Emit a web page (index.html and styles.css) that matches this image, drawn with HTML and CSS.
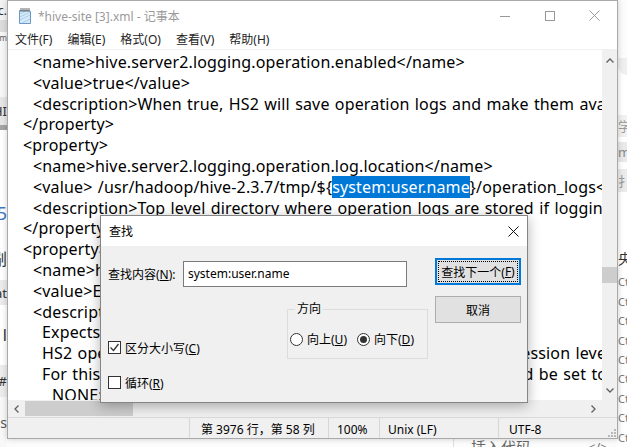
FILE: index.html
```html
<!DOCTYPE html>
<html lang="zh-CN">
<head>
  <meta charset="UTF-8">
  <title>*hive-site [3].xml - 记事本</title>
  <link rel="stylesheet" href="styles.css">
</head>
<body>
  <div class="screen">
    <div class="desk-left">
      <div class="dl dl-a"><span>ac.</span></div>
      <div class="dl dl-b"></div>
      <div class="dl dl-c"><span>m</span></div>
      <div class="dl dl-d"><span>HI</span></div>
      <div class="dl dl-e"></div>
      <div class="dl dl-f"></div>
      <div class="dl dl-g"><span>5</span></div>
      <div class="dl dl-h"><span>剐</span></div>
      <div class="dl dl-i"><span>at</span></div>
      <div class="dl dl-j"><span>l</span></div>
      <div class="dl dl-k"><span>#</span></div>
      <div class="dl dl-l"><span>s</span></div>
    </div>

    <div class="middle">
      <div class="window">
        <div class="titlebar">
          <svg class="app-icon" width="16" height="17" viewBox="0 0 16 17">
            <path d="M2.5 3.5h10l1 1v12h-11z" fill="#d6ebf9" stroke="#6a96c4"/>
            <path d="M3 7l6-3M3 10l10-5M3 13l10-5M5 16l8-4" stroke="#a9cbea"/>
            <path d="M4 1v4M6 1v4M8 1v4M10 1v4M12 1v4" stroke="#6b6b6b"/>
          </svg>
          <span class="title">*hive-site [3].xml - 记事本</span>
          <div class="win-controls">
            <div class="ctl"><svg width="10" height="10" viewBox="0 0 10 10"><path d="M0 5.5h10" stroke="#999"/></svg></div>
            <div class="ctl"><svg width="10" height="10" viewBox="0 0 10 10"><rect x="0.5" y="0.5" width="9" height="9" fill="none" stroke="#999"/></svg></div>
            <div class="ctl"><svg width="11" height="11" viewBox="0 0 11 11"><path d="M0.5 0.5l10 10M10.5 0.5l-10 10" stroke="#999"/></svg></div>
          </div>
        </div>

        <div class="menubar">
          <span>文件(F)</span>
          <span>编辑(E)</span>
          <span>格式(O)</span>
          <span>查看(V)</span>
          <span>帮助(H)</span>
        </div>

        <div class="editor">
          <div class="edit-row">
            <div class="text">
              <div class="ln i2">&lt;name&gt;hive.server2.logging.operation.enabled&lt;/name&gt;</div>
              <div class="ln i2">&lt;value&gt;true&lt;/value&gt;</div>
              <div class="ln i2">&lt;description&gt;When true, HS2 will save operation logs and make them available for clients&lt;/description&gt;</div>
              <div class="ln i1">&lt;/property&gt;</div>
              <div class="ln i1">&lt;property&gt;</div>
              <div class="ln i2">&lt;name&gt;hive.server2.logging.operation.log.location&lt;/name&gt;</div>
              <div class="ln i2">&lt;value&gt; /usr/hadoop/hive-2.3.7/tmp/${<span class="sel">system:user.name</span>}/operation_logs&lt;/value&gt;</div>
              <div class="ln i2">&lt;description&gt;Top level directory where operation logs are stored if logging functionality is enabled&lt;/description&gt;</div>
              <div class="ln i1">&lt;/property&gt;</div>
              <div class="ln i1">&lt;property&gt;</div>
              <div class="ln i2">&lt;name&gt;hive.server2.logging.operation.level&lt;/name&gt;</div>
              <div class="ln i2">&lt;value&gt;EXECUTION&lt;/value&gt;</div>
              <div class="ln i2">&lt;description&gt;</div>
              <div class="ln i3">Expects one of [none, execution, performance, verbose].</div>
              <div class="ln i3">HS2 operation logging mode available to clients to be set at session level.</div>
              <div class="ln i3">For this to work, hive.server2.logging.operation.enabled should be set to true.</div>
              <div class="ln i4">NONE: Ignore any logging</div>
            </div>
            <div class="vscroll">
              <div class="arrow"><svg width="8" height="5" viewBox="0 0 8 5"><path d="M0.5 4.5l3.5-3.5 3.5 3.5" fill="none" stroke="#606060" stroke-width="1.3"/></svg></div>
              <div class="vtrack"><div class="vthumb"></div></div>
              <div class="arrow"><svg width="8" height="5" viewBox="0 0 8 5"><path d="M0.5 0.5l3.5 3.5 3.5-3.5" fill="none" stroke="#606060" stroke-width="1.3"/></svg></div>
            </div>
          </div>
          <div class="hscroll-row">
            <div class="hscroll">
              <div class="harrow"><svg width="5" height="8" viewBox="0 0 5 8"><path d="M4.5 0.5l-3.5 3.5 3.5 3.5" fill="none" stroke="#606060" stroke-width="1.3"/></svg></div>
              <div class="hthumb"></div>
              <div class="harrow right"><svg width="5" height="8" viewBox="0 0 5 8"><path d="M0.5 0.5l3.5 3.5-3.5 3.5" fill="none" stroke="#606060" stroke-width="1.3"/></svg></div>
            </div>
            <div class="corner"></div>
          </div>
        </div>

        <div class="statusbar">
          <div class="seg seg1"></div>
          <div class="seg seg2">第 3976 行，第 58 列</div>
          <div class="seg seg3">100%</div>
          <div class="seg seg4">Unix (LF)</div>
          <div class="seg seg5">UTF-8</div>
          <svg class="grip" width="9" height="9" viewBox="0 0 9 9">
            <path d="M7 1h2v2H7zM4 4h2v2H4zM7 4h2v2H7zM1 7h2v2H1zM4 7h2v2H4zM7 7h2v2H7z" fill="#b8b8b8"/>
          </svg>
        </div>

        <div class="dialog">
          <div class="dlg-title">
            <span>查找</span>
            <svg class="dlg-close" width="11" height="11" viewBox="0 0 11 11"><path d="M0.5 0.5l10 10M10.5 0.5l-10 10" stroke="#111"/></svg>
          </div>
          <div class="dlg-body">
            <div class="dlg-main">
              <div class="find-row">
                <span class="find-label">查找内容(<u>N</u>):</span>
                <div class="find-input">system:user.name</div>
              </div>
              <div class="opts-row">
                <div class="checks">
                  <div class="check">
                    <span class="box"><svg width="11" height="11" viewBox="0 0 11 11"><path d="M1.5 5.5l3 3 5-6.5" fill="none" stroke="#333" stroke-width="1.3"/></svg></span>
                    <span>区分大小写(<u>C</u>)</span>
                  </div>
                  <div class="check second">
                    <span class="box"></span>
                    <span>循环(<u>R</u>)</span>
                  </div>
                </div>
                <fieldset class="direction">
                  <legend>方向</legend>
                  <div class="radios">
                    <div class="radio"><span class="dot"></span><span>向上(<u>U</u>)</span></div>
                    <div class="radio"><span class="dot on"></span><span>向下(<u>D</u>)</span></div>
                  </div>
                </fieldset>
              </div>
            </div>
            <div class="dlg-buttons">
              <div class="btn default"><span class="focus">查找下一个(<u>F</u>)</span></div>
              <div class="btn">取消</div>
            </div>
          </div>
        </div>
      </div>

      <div class="desk-bottom">
        <div class="db-left"></div>
        <div class="db-panel">
          <span class="db-text">插入代码</span>
          <span class="db-code">&lt;/&gt;</span>
        </div>
      </div>
    </div>

    <div class="desk-right">
      <div class="dr dr-a"></div>
      <div class="dr dr-b"></div>
      <div class="dr dr-c"></div>
      <div class="dr dr-d"><span>学习</span></div>
      <div class="dr dr-e"></div>
      <div class="dr dr-f"><span>md</span></div>
      <div class="dr dr-g"></div>
      <div class="dr dr-h"><span>扌</span></div>
      <div class="dr dr-i"></div>
      <div class="dr dr-j"><span>央</span></div>
      <div class="dr-list">
        <span>Ctrl</span><span>Ctrl</span><span>Ctrl</span><span>Ctrl</span><span>Ctrl</span>
        <span>Ctrl</span><span>Ctrl</span><span>Ctrl</span><span>Ctrl</span>
      </div>
    </div>
  </div>
</body>
</html>
```

FILE: styles.css
```css
* { box-sizing: border-box; }
body {
  margin: 0;
  width: 627px;
  height: 447px;
  overflow: hidden;
  background: #f7f7f7;
  font-family: "Noto Sans", "Noto Sans CJK SC", sans-serif;
  color: #000;
}
.screen { display: flex; width: 627px; height: 447px; }

/* desktop behind the window */
.desk-left { width: 7px; display: flex; flex-direction: column; overflow: hidden; background: #fafafa; }
.dl { display: flex; justify-content: flex-end; overflow: hidden; white-space: nowrap; font-size: 12px; color: #333; }
.dl span { flex-shrink: 0; }
.dl-a { height: 20px; background: #f2f2f2; align-items: center; }
.dl-b { height: 12px; background: #dcdcdc; }
.dl-c { height: 65px; background: #f7f7f7; font-size: 8px; color: #555; }
.dl-d { height: 28px; background: #e6e6e6; align-items: center; font-size: 13px; }
.dl-e { height: 5px; background: #a4a4a4; }
.dl-f { height: 60px; background: #fff; }
.dl-g { height: 45px; background: #fff; align-items: center; color: #3b78c8; font-size: 18px; }
.dl-h { height: 45px; background: #fff; align-items: center; font-size: 16px; }
.dl-i { height: 25px; background: #ebebeb; align-items: center; font-size: 13px; }
.dl-j { height: 60px; background: #fff; align-items: center; font-size: 16px; }
.dl-k { height: 32px; background: #ececec; align-items: center; font-size: 13px; }
.dl-l { flex: 1; background: #f8f8f8; align-items: center; font-size: 14px; color: #555; }

.desk-right { width: 9px; display: flex; flex-direction: column; overflow: hidden; background: #fff; }
.dr { overflow: hidden; white-space: nowrap; font-size: 13px; }
.dr-a { height: 60px; background: #fcfcfc; }
.dr-b { height: 18px; background: #efefef; border-radius: 0 0 0 9px; }
.dr-c { height: 42px; background: #fff; }
.dr-d { height: 22px; background: #f1f1f1; color: #9a9a9a; line-height: 22px; }
.dr-e { height: 6px; }
.dr-f { height: 20px; background: #e9e9e9; color: #888; line-height: 20px; }
.dr-g { height: 8px; }
.dr-h { height: 24px; background: #ebebeb; color: #999; line-height: 24px; }
.dr-i { height: 55px; }
.dr-j { height: 28px; color: #333; line-height: 28px; font-size: 14px; }
.dr-list { display: flex; flex-direction: column; font-size: 11px; line-height: 19.4px; color: #777; white-space: nowrap; }

.middle { width: 611px; display: flex; flex-direction: column; }
.desk-bottom { flex: 1; display: flex; background: #fcfcfc; overflow: hidden; }
.db-left { width: 446px; }
.db-panel { flex: 1; display: flex; border-left: 1px solid #e0e0e0; padding-left: 17px; gap: 57px; font-size: 15px; line-height: 16px; color: #666; }
.db-code { font-size: 13px; color: #777; }

/* notepad window */
.window {
  position: relative;
  height: 439px;
  border: 1px solid #a9a9a9;
  background: #fff;
  display: flex;
  flex-direction: column;
  box-shadow: 0 0 6px rgba(0,0,0,0.2);
  z-index: 1;
}
.titlebar { height: 29px; display: flex; align-items: center; }
.app-icon { margin-left: 9px; }
.title { margin-left: 5px; font-size: 12px; color: #9a9a9a; }
.win-controls { margin-left: auto; display: flex; height: 100%; }
.ctl { width: 45px; display: flex; align-items: center; justify-content: center; }

.menubar {
  height: 20px;
  border-bottom: 1px solid #f0f0f0;
  display: flex;
  gap: 15px;
  padding-left: 7px;
  font-size: 12px;
  line-height: 19px;
  color: #222;
}

.editor { display: flex; flex-direction: column; }
.edit-row { height: 350px; display: flex; }
.text {
  flex: 1;
  overflow: hidden;
  padding-top: 2px;
  font-size: 16px;
  line-height: 20.8px;
  letter-spacing: 0.15px;
  word-spacing: 1px;
}
.ln { white-space: pre; height: 20.8px; }
.i1 { padding-left: 15px; }
.i2 { padding-left: 25px; }
.i3 { padding-left: 34px; }
.i4 { padding-left: 44px; }
.sel { background: #0078d7; color: #fff; }

.vscroll { width: 15px; background: #f0f0f0; display: flex; flex-direction: column; }
.arrow { height: 20px; display: flex; align-items: center; justify-content: center; }
.vtrack { flex: 1; }
.vthumb { margin-top: 197px; height: 16px; background: #cdcdcd; }

.hscroll-row { height: 17px; display: flex; }
.hscroll { flex: 1; background: #f0f0f0; display: flex; align-items: center; }
.harrow { width: 17px; height: 100%; display: flex; align-items: center; justify-content: center; }
.harrow.right { margin-left: auto; }
.hthumb { width: 108px; height: 15px; background: #cdcdcd; }
.corner { width: 15px; background: #f0f0f0; }

.statusbar {
  height: 21px;
  border-top: 1px solid #dadada;
  background: #f0f0f0;
  display: flex;
  font-size: 12px;
}
.seg { border-left: 1px solid #d7d7d7; padding: 2px 0 0 10px; display: flex; align-items: center; white-space: nowrap; }
.seg1 { width: 181px; border-left: none; }
.seg2 { width: 139px; padding-left: 11px; }
.seg3 { width: 51px; padding-left: 8px; }
.seg4 { width: 119px; padding-left: 8px; }
.seg5 { flex: 1; }
.grip { align-self: flex-end; margin: 0 1px 1px 0; }

/* find dialog, floating over the editor */
.dialog {
  position: absolute;
  left: 92px;
  top: 214px;
  width: 428px;
  height: 188px;
  border: 1px solid #858585;
  background: #f0f0f0;
  box-shadow: 0 3px 12px rgba(0,0,0,0.3);
  font-size: 12px;
  display: flex;
  flex-direction: column;
  z-index: 2;
}
.dlg-title { height: 30px; background: #fff; display: flex; align-items: center; padding-left: 8px; }
.dlg-close { margin-left: auto; margin-right: 8px; }
.dlg-body { flex: 1; display: flex; gap: 6px; padding: 12px 6px 0 7px; }
.dlg-main { flex: 1; }
.find-row { margin-top: 3px; height: 26px; display: flex; align-items: center; }
.find-label { width: 75px; }
.find-input {
  width: 224px;
  height: 26px;
  border: 1px solid #7a7a7a;
  background: #fff;
  padding-left: 4px;
  line-height: 24px;
}
.opts-row { margin-top: 14px; display: flex; align-items: flex-start; }
.checks { width: 179px; padding-top: 40px; }
.check { height: 13px; display: flex; align-items: center; gap: 4px; }
.check.second { margin-top: 22px; }
.box {
  width: 13px;
  height: 13px;
  border: 1px solid #333;
  background: #fff;
  display: flex;
  align-items: center;
  justify-content: center;
}
.direction {
  width: 141px;
  margin: 0;
  padding: 0 0 11px 2px;
  border: 1px solid #dcdcdc;
}
.direction legend { margin-left: 5px; padding: 0 2px; line-height: 16px; }
.radios { margin-top: 14px; height: 16px; display: flex; align-items: center; gap: 10px; }
.radio { display: flex; align-items: center; gap: 4px; }
.dot {
  width: 13px;
  height: 13px;
  border: 1px solid #333;
  border-radius: 50%;
  background: #fff;
  display: flex;
  align-items: center;
  justify-content: center;
}
.dot.on::after { content: ""; width: 7px; height: 7px; border-radius: 50%; background: #333; }

.dlg-buttons { width: 86px; display: flex; flex-direction: column; gap: 11px; }
.btn {
  height: 27px;
  border: 1px solid #adadad;
  background: #e1e1e1;
  display: flex;
  align-items: center;
  justify-content: center;
}
.btn.default { border: 2px solid #0078d7; padding: 1px; }
.focus {
  width: 100%;
  height: 100%;
  border: 1px dotted #000;
  display: flex;
  align-items: center;
  justify-content: center;
  white-space: nowrap;
}
```
